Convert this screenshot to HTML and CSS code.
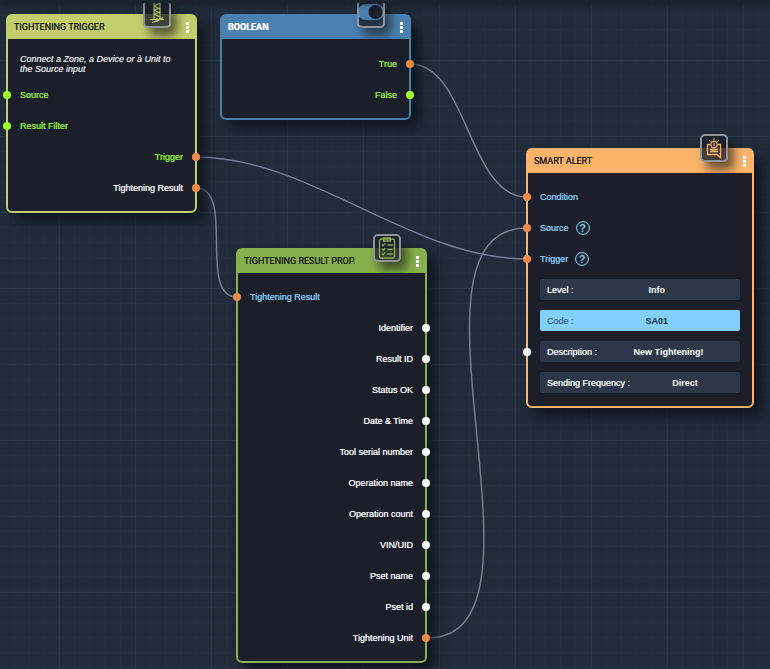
FILE: index.html
```html
<!DOCTYPE html>
<html lang="en">
<head>
<meta charset="utf-8">
<title>Flow editor</title>
<link rel="stylesheet" href="styles.css">
</head>
<body>
<main class="canvas">
  <svg class="wires" aria-hidden="true">
    <path d="M410 64C468 64 468 197 527 197"/>
    <path d="M196 157C311 157 411 259 527 259"/>
    <path d="M196 188C236 188 197 297 237 297"/>
    <path d="M427 638C567 638 386 228 527 228"/>
  </svg>

  <section class="node node-trigger">
    <header class="node-head">
      <h2>TIGHTENING TRIGGER</h2>
      <span class="badge">
        <svg viewBox="0 0 24 24" aria-hidden="true">
          <path d="M9 1v16M15 1v16" stroke-width="1"/>
          <path d="M9 4l6-3M9 4l6 3M9 8l6 3M9 8l6-2M9 12l6 3M9 12l6-2" stroke-width="1.300"/>
          <path d="M5 17.500h14M7 20.500l6-2 5-3M12 16v4" stroke-width="1.200"/>
        </svg>
      </span>
      <button class="menu" aria-label="Menu"><i></i><i></i><i></i></button>
    </header>
    <div class="node-body">
      <p class="hint">Connect a Zone, a Device or à Unit to the Source input</p>
      <div class="row lime"><i class="port in bool"></i>Source</div>
      <div class="row lime"><i class="port in bool"></i>Result Filter</div>
      <div class="row out-row lime">Trigger<i class="port out linked"></i></div>
      <div class="row out-row">Tightening Result<i class="port out linked"></i></div>
    </div>
  </section>

  <section class="node node-boolean">
    <header class="node-head">
      <h2>BOOLEAN</h2>
      <span class="badge">
        <svg viewBox="0 0 24 24" aria-hidden="true">
          <rect class="fill" x="-1" y="2" width="26" height="16" rx="8"/>
          <circle class="knob" cx="16.500" cy="10" r="7"/>
        </svg>
      </span>
      <button class="menu" aria-label="Menu"><i></i><i></i><i></i></button>
    </header>
    <div class="node-body">
      <div class="row out-row lime">True<i class="port out linked"></i></div>
      <div class="row out-row lime">False<i class="port out bool"></i></div>
    </div>
  </section>

  <section class="node node-result">
    <header class="node-head">
      <h2>TIGHTENING RESULT PROP.</h2>
      <span class="badge">
        <svg viewBox="0 0 24 24" aria-hidden="true">
          <rect x="4.500" y="3" width="15" height="19" rx="2"/>
          <path d="M8.500 2h7v3h-7z"/>
          <path d="M7 8.500l1.200 1.200 2-2.400M7 13l1.200 1.200 2-2.400M7 17.500l1.200 1.200 2-2.400M12.500 9h5M12.500 13.500h5M12.500 18h5"/>
        </svg>
      </span>
      <button class="menu" aria-label="Menu"><i></i><i></i><i></i></button>
    </header>
    <div class="node-body">
      <div class="row cyan"><i class="port in linked"></i>Tightening Result</div>
      <div class="row out-row">Identifier<i class="port out"></i></div>
      <div class="row out-row">Result ID<i class="port out"></i></div>
      <div class="row out-row">Status OK<i class="port out"></i></div>
      <div class="row out-row">Date &amp; Time<i class="port out"></i></div>
      <div class="row out-row">Tool serial number<i class="port out"></i></div>
      <div class="row out-row">Operation name<i class="port out"></i></div>
      <div class="row out-row">Operation count<i class="port out"></i></div>
      <div class="row out-row">VIN/UID<i class="port out"></i></div>
      <div class="row out-row">Pset name<i class="port out"></i></div>
      <div class="row out-row">Pset id<i class="port out"></i></div>
      <div class="row out-row">Tightening Unit<i class="port out linked"></i></div>
    </div>
  </section>

  <section class="node node-alert">
    <header class="node-head">
      <h2>SMART ALERT</h2>
      <span class="badge">
        <svg viewBox="0 0 24 24" aria-hidden="true">
          <path d="M8 8.500H5.500V18.500H15l3.500 3V8.500H16"/>
          <circle cx="12" cy="8.500" r="3.200"/>
          <path d="M12 7v3"/>
          <path d="M8 13.500h8M8 15.500h8" stroke-width="1.500"/>
          <path d="M12 2v2.500M7 4l1.500 1.500M17 4l-1.500 1.500" stroke-width="1"/>
        </svg>
      </span>
      <button class="menu" aria-label="Menu"><i></i><i></i><i></i></button>
    </header>
    <div class="node-body">
      <div class="row cyan"><i class="port in linked"></i>Condition</div>
      <div class="row cyan"><i class="port in linked"></i>Source<button class="help" aria-label="About Source">?</button></div>
      <div class="row cyan"><i class="port in linked"></i>Trigger<button class="help" aria-label="About Trigger">?</button></div>
      <div class="row"><button class="field"><span>Level :</span><b>Info</b></button></div>
      <div class="row"><button class="field active"><span>Code :</span><b>SA01</b></button></div>
      <div class="row"><i class="port in"></i><button class="field"><span>Description :</span><b>New Tightening!</b></button></div>
      <div class="row"><button class="field"><span>Sending Frequency :</span><b>Direct</b></button></div>
    </div>
  </section>
  <div class="topbar"></div>
</main>
</body>
</html>
```
FILE: styles.css
```css
* {
  box-sizing: border-box;
}

body {
  margin: 0;
  background: #212c3b;
  font-family: "Liberation Sans", Arial, sans-serif;
  font-size: 9px;
  color: #eef0f4;
}

button {
  padding: 0;
  border: 0;
  background: none;
  color: inherit;
  font: inherit;
}

.canvas {
  position: relative;
  min-height: 100vh;
  overflow: hidden;
  background-color: #212c3b;
  background-image:
    linear-gradient(to right, rgba(120, 160, 190, 0.05) 1px, transparent 1px),
    linear-gradient(to bottom, rgba(120, 160, 190, 0.05) 1px, transparent 1px),
    linear-gradient(to right, rgba(120, 160, 190, 0.03) 1px, transparent 1px),
    linear-gradient(to bottom, rgba(120, 160, 190, 0.03) 1px, transparent 1px);
  background-size: 76px 76px, 76px 76px, calc(76px / 5) calc(76px / 5), calc(76px / 5) calc(76px / 5);
  background-position: 59px 60px;
}

.topbar {
  position: absolute;
  inset: 0 0 auto;
  height: 3px;
  background: #1c242f;
  box-shadow: 0 1px 6px rgba(10, 14, 20, 0.7);
}

.wires {
  position: absolute;
  inset: 0;
  width: 100%;
  height: 100%;
  fill: none;
  stroke: #737d94;
  stroke-width: 1.500;
}

/* Nodes sit at free positions on the canvas */
.node {
  --accent: #c2cd6c;
  --title: #1b1e20;
  position: absolute;
  width: 191px;
  border: 2px solid var(--accent);
  border-radius: 6px;
  background: var(--accent);
  box-shadow: 8px 8px 12px rgba(8, 11, 18, 0.7);
}

.node-trigger { left: 6px; top: 14px; }
.node-boolean { --accent: #4a80b0; --title: #fff; left: 220px; top: 14px; }
.node-result { --accent: #86b04b; left: 236px; top: 248px; }
.node-alert { --accent: #fcb46b; left: 526px; top: 148px; width: 228px; }

.node-head {
  position: relative;
  display: flex;
  align-items: center;
  justify-content: space-between;
  height: 23px;
  padding: 0 6px 2px;
}

.node-head h2 {
  margin: 0;
  font-family: Roboto, "Liberation Sans", sans-serif;
  font-size: 9px;
  font-weight: 400;
  color: var(--title);
  text-shadow: 0 0 0 currentColor;
}

.node-boolean h2 {
  font-weight: 700;
}

.badge {
  position: absolute;
  top: -16px;
  right: 24px;
  display: flex;
  width: 28px;
  height: 28px;
  border: 2px solid #90949a;
  border-radius: 5px;
  background: rgba(28, 31, 42, 0.8);
  box-shadow: 6px 8px 10px rgba(20, 20, 20, 0.6);
}

.badge svg {
  width: 24px;
  height: 24px;
  fill: none;
  stroke: var(--accent);
  stroke-width: 1.300;
}

.badge .fill { fill: var(--accent); stroke: none; }
.badge .knob { fill: #1c1f2a; stroke: none; }

.menu {
  position: relative;
  display: flex;
  flex-direction: column;
  gap: 1px;
  padding-top: 2px;
}

.menu i {
  width: 3px;
  height: 3px;
  background: #fff;
}

.node-body {
  position: relative;
  padding: 9px 0 8px;
  border-radius: 0 0 4px 4px;
  background: #1c1f2a;
}

.node-result .node-body,
.node-alert .node-body {
  padding-top: 8px;
}

.hint {
  height: 31px;
  margin: 0;
  padding: 6px 12px 0;
  line-height: 10px;
  font-style: italic;
  color: #d8dade;
  text-shadow: 0 0 0 currentColor;
}

.row {
  position: relative;
  display: flex;
  align-items: center;
  height: 31px;
  padding: 0 12px;
  text-shadow: 0 0 0 currentColor;
}

.out-row { justify-content: flex-end; }
.lime { color: #8fe633; }
.cyan { color: #7fc6ee; }

.port {
  position: absolute;
  top: 12px;
  width: 8px;
  height: 8px;
  border-radius: 50%;
  background: #fff;
}

.port.in { left: -5px; }
.port.out { right: -5px; }
.port.bool { background: #a3ff2e; }
.port.linked { background: #ec8c48; }

.help {
  width: 14px;
  height: 14px;
  margin-left: 7px;
  border: 1px solid currentColor;
  border-radius: 50%;
  font-size: 11px;
  font-weight: 700;
  line-height: 12px;
  text-align: center;
  box-shadow: inset 0 0 1px currentColor;
}

.field {
  display: flex;
  flex: 1;
  align-items: center;
  height: 21px;
  padding-left: 7px;
  border-radius: 2px;
  background: #2d3748;
  text-shadow: inherit;
}

.field b {
  flex: 1;
  text-align: center;
  text-shadow: none;
  color: #fff;
}

.field.active {
  background: #84d0fc;
  color: #234358;
  text-shadow: none;
}

.field.active b {
  color: #14303f;
}
```
